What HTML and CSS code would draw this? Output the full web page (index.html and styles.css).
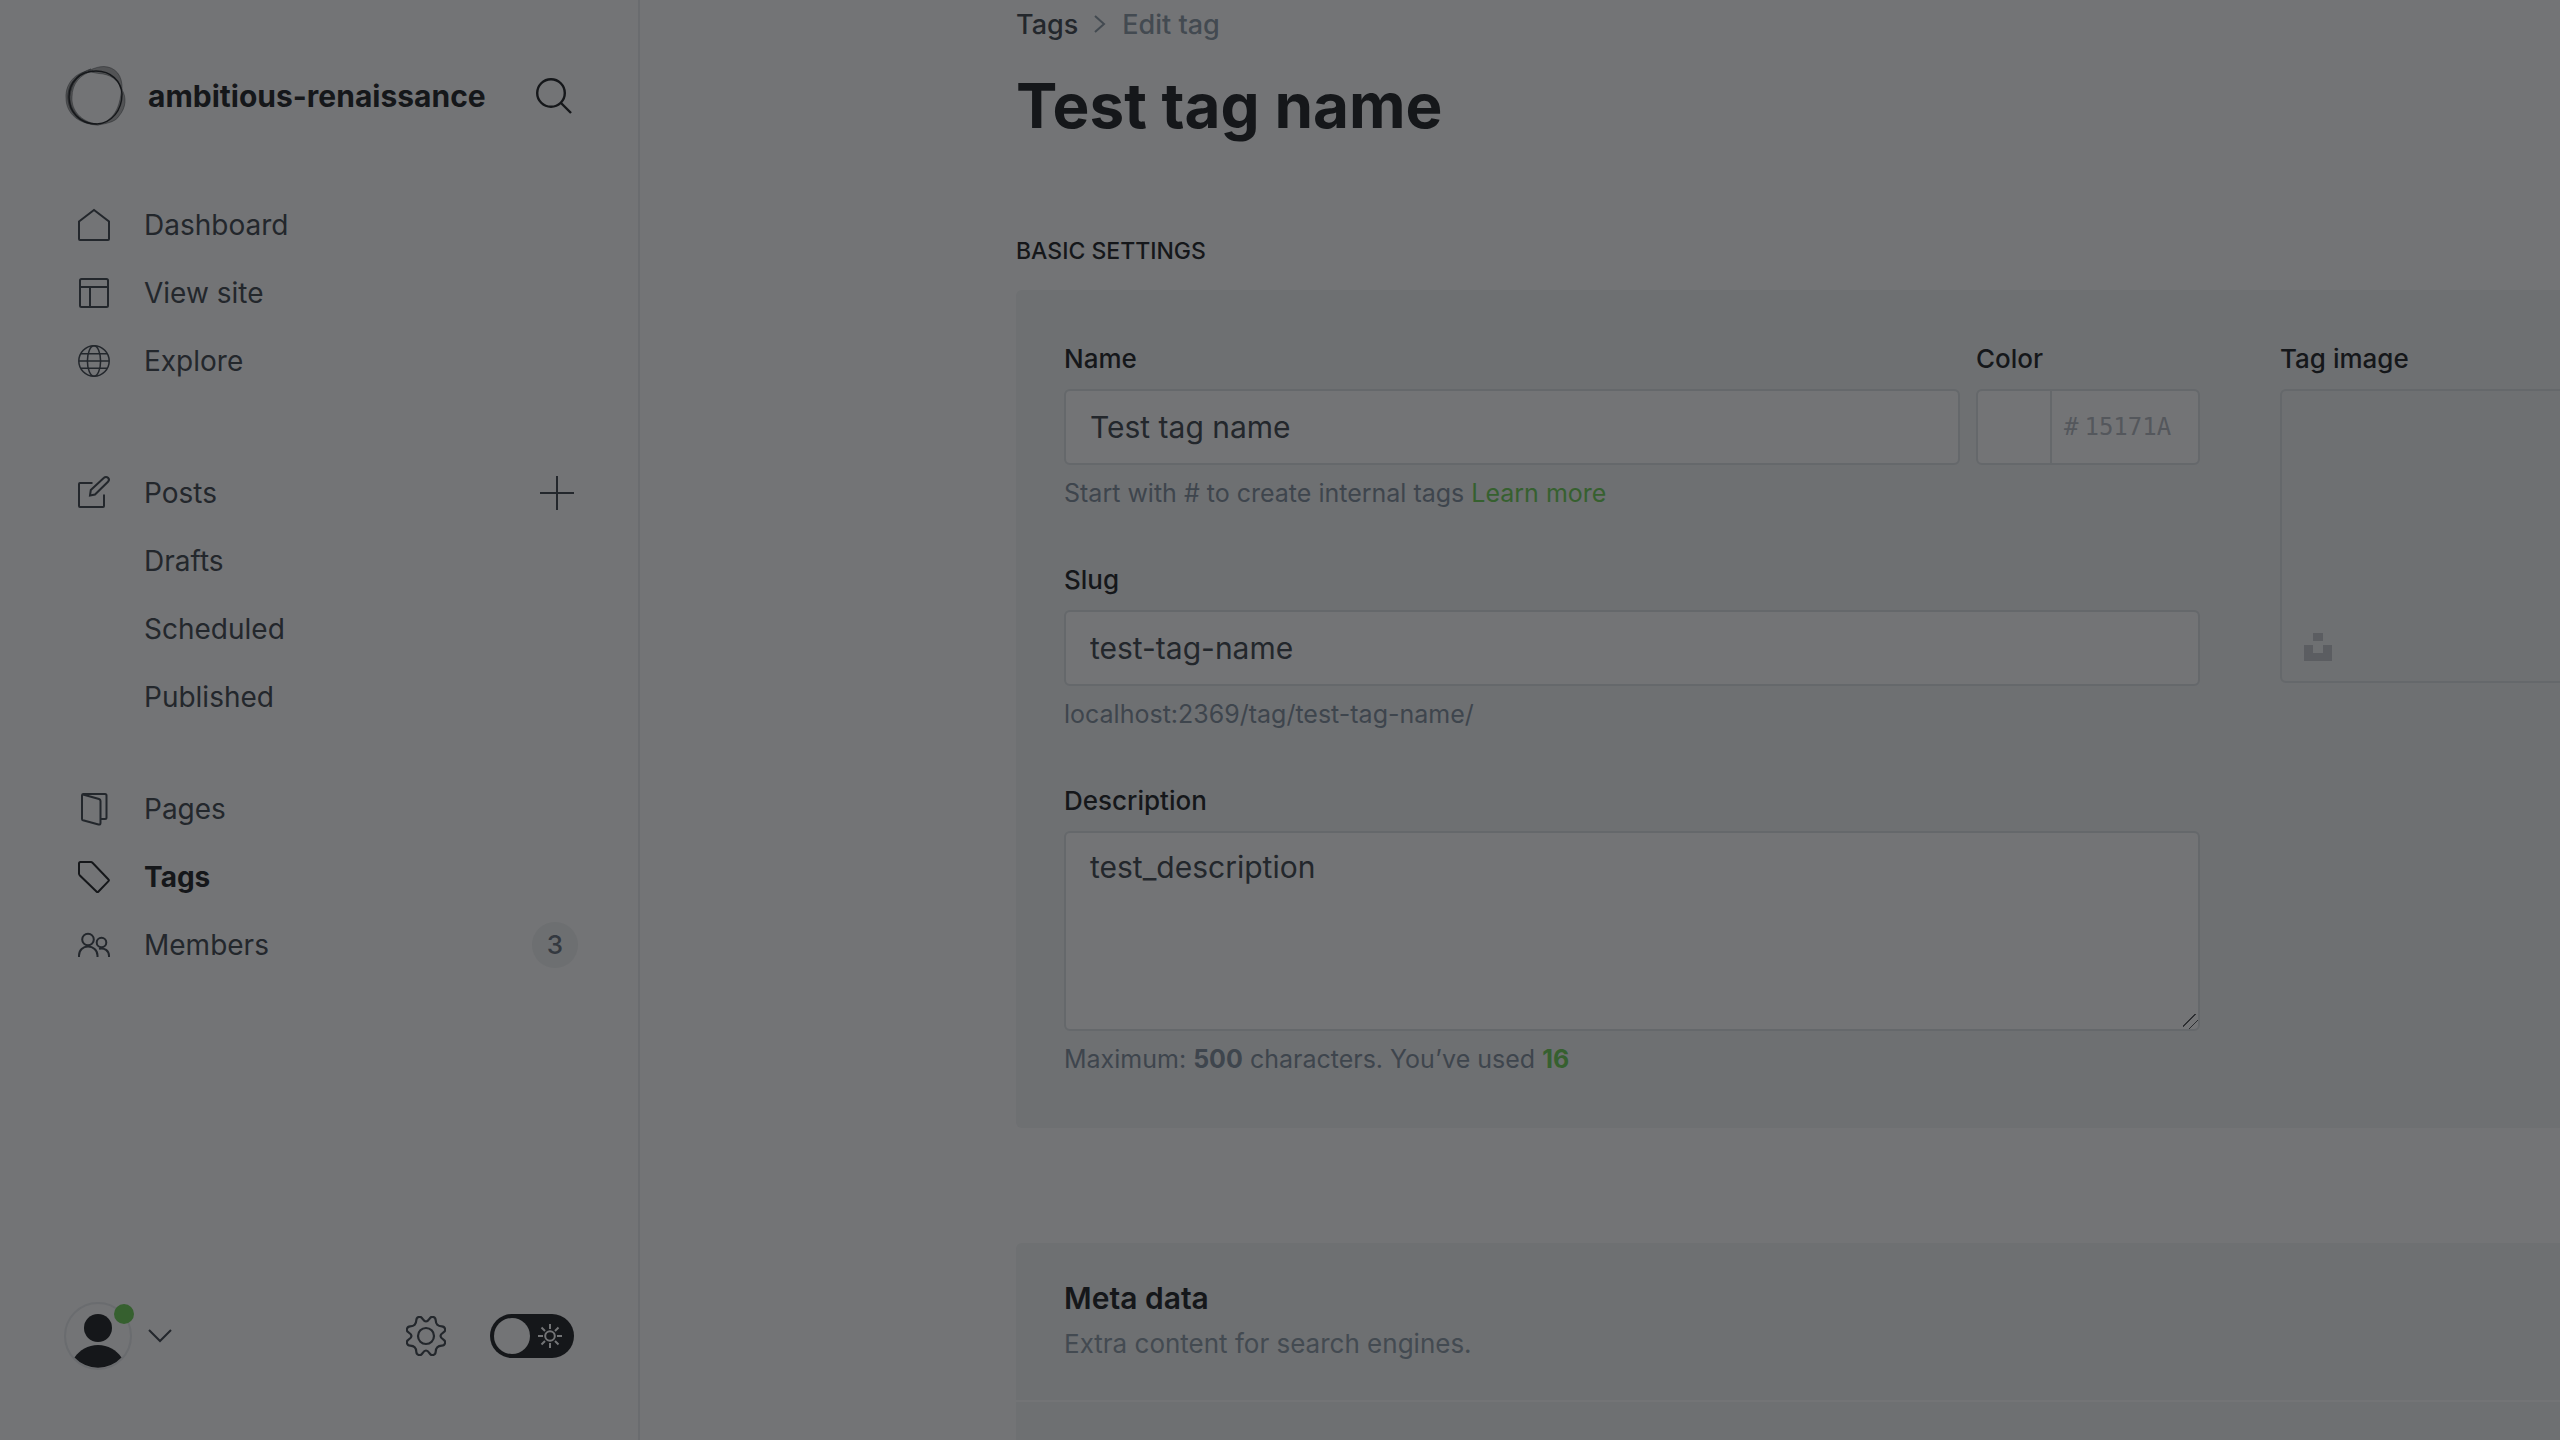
FILE: index.html
```html
<!DOCTYPE html>
<html lang="en">
<head>
<meta charset="utf-8">
<title>Edit tag - ambitious-renaissance</title>
<link rel="stylesheet" href="styles.css">
</head>
<body>
<div class="app">
  <aside class="sidebar">
    <header class="site">
      <svg class="site-logo" viewBox="0 0 60 60" aria-hidden="true">
        <g fill="#15171a" fill-opacity=".35" stroke="#15171a" stroke-opacity=".6" stroke-width=".6">
          <path d="M27 5C12 4-1 16 0 32c0 16 14 27 31 26C15 56 5 44 6 31 6 18 14 8 27 5Z"/>
          <path d="M22 5C28 2 33 .5 38 .5 49 1 57 9 56 24 53 14 44 8 33 7.500 29 7 25 6 22 5Z"/>
          <path d="M55.500 23C61 31 60 42 53 50c-3 5-9 7-21 9 16-5 22-17 23.500-36Z"/>
          <path d="M25 3C9 8 0 20 2 35c2 14 14 24 30 24C15 57 4 45 4 31 5 18 13 7 25 3Z"/>
        </g>
        <path d="M30 5c15 0 25 10 26 23 0 16-10 29-25 30C13 58 3 45 3 31 3 16 14 5 30 5Z" fill="none" stroke="#15171a" stroke-width="1.400"/>
      </svg>
      <a class="site-name" href="#">ambitious-renaissance</a>
      <button class="icon-button" type="button" aria-label="Search">
        <svg width="36" height="36" viewBox="0 0 36 36" fill="none" stroke="#15171a" stroke-width="2.4"><circle cx="15" cy="15" r="13.8"/><path d="M25 25l10 10"/></svg>
      </button>
    </header>

    <nav class="nav">
      <ul class="nav-group">
        <li class="nav-row"><a class="nav-link" href="#"><svg class="nav-icon" viewBox="0 0 32 32"><path d="M1 12.5 16 1l15 11.5V30q0 1-1 1H2q-1 0-1-1Z"/></svg>Dashboard</a></li>
        <li class="nav-row"><a class="nav-link" href="#"><svg class="nav-icon" viewBox="0 0 32 32"><rect x="2" y="2" width="28" height="28" rx="1.5"/><path d="M2 10h28M12 10v20"/></svg>View site</a></li>
        <li class="nav-row"><a class="nav-link" href="#"><svg class="nav-icon nav-icon-fine" viewBox="0 0 32 32"><circle cx="16" cy="16" r="15.2"/><ellipse cx="16" cy="16" rx="6.6" ry="15.2"/><path d="M1 16h30M3 8.8h26M3 23.2h26"/></svg>Explore</a></li>
      </ul>
      <ul class="nav-group nav-group-posts">
        <li class="nav-row"><a class="nav-link" href="#"><svg class="nav-icon" viewBox="0 0 32 32"><path d="M14.5 6H2Q1 6 1 7v22q0 1 1 1h23q1 0 1-1V17.500"/><path d="M12 18.500l.8-5.500L26 .8a2.800 2.800 0 0 1 4 4L17 17.500Z"/></svg>Posts</a>
          <button class="icon-button" type="button" aria-label="New post"><svg width="34" height="34" viewBox="0 0 34 34" stroke="#23272c" stroke-width="2"><path d="M17 0v34M0 17h34"/></svg></button></li>
        <li class="nav-row"><a class="nav-link nav-sub" href="#">Drafts</a></li>
        <li class="nav-row"><a class="nav-link nav-sub" href="#">Scheduled</a></li>
        <li class="nav-row"><a class="nav-link nav-sub" href="#">Published</a></li>
      </ul>
      <ul class="nav-group">
        <li class="nav-row"><a class="nav-link" href="#"><svg class="nav-icon" viewBox="0 0 32 32"><path d="M22.500 26H27q1.500 0 1.500-1.500V2.500Q28.500 1 27 1H5Q4 1 4 2.500V26q0 1 1 1.300l15.500 4.200q2 .5 2-1.500V8q0-1.500-1.500-2L5 1.500"/></svg>Pages</a></li>
        <li class="nav-row"><a class="nav-link nav-active" href="#"><svg class="nav-icon" viewBox="0 0 32 32"><path d="M2.500 1H13q.8 0 1.500.7L30.500 18.500q.8.800 0 1.600L20.300 30.700q-.8.800-1.600 0L1.900 14.500Q1 13.500 1 12.500v-10Q1 1 2.500 1Z"/></svg>Tags</a></li>
        <li class="nav-row"><a class="nav-link" href="#"><svg class="nav-icon" viewBox="0 0 32 32"><circle cx="10" cy="10.500" r="5.800"/><path d="M1 28v-1.500C1 21 5 17.500 10 17.500s9.500 3.500 9.500 9V28"/><circle cx="23.500" cy="13.500" r="4.800"/><path d="M21 19.800c5.500-1.500 10 2 10 7V28"/></svg>Members</a>
          <span class="badge">3</span></li>
      </ul>
    </nav>

    <footer class="account">
      <button class="account-menu" type="button" aria-label="Account menu">
        <span class="avatar">
          <svg width="64" height="64" viewBox="0 0 64 64" fill="#15171a"><circle cx="32" cy="24" r="14"/><path d="M8.500 53.500C13.500 46 22 41 32 41s18.500 5 23.500 12.500A32 32 0 0 1 8.500 53.500Z"/></svg>
          <span class="avatar-dot"></span>
        </span>
        <svg width="24" height="14" viewBox="0 0 24 14" fill="none" stroke="#23272c" stroke-width="2"><path d="M1 1l11 11L23 1"/></svg>
      </button>
      <a class="settings" href="#" aria-label="Settings">
        <svg width="40" height="40" viewBox="0 0 40 40" fill="none" stroke="#23272c" stroke-width="2.200">
          <defs><path id="gear-side" d="M20 5.500C21.800 5.500 22.300 4.500 23.800 2.300 25.500-.3 29.500.8 29.700 4.200 29.800 6.500 29.900 7.300 31.300 8.700 32.700 10.100 33.500 10.200 35.800 10.300 39.200 10.500 40.300 14.500 37.700 16.200 35.500 17.700 34.500 18.200 34.500 20"/></defs>
          <use href="#gear-side"/><use href="#gear-side" transform="rotate(90 20 20)"/><use href="#gear-side" transform="rotate(180 20 20)"/><use href="#gear-side" transform="rotate(270 20 20)"/>
          <circle cx="20" cy="20" r="8"/>
        </svg>
      </a>
      <button class="theme-switch" type="button" aria-label="Toggle night shift">
        <span class="theme-knob"></span>
        <svg width="24" height="24" viewBox="0 0 24 24" fill="none" stroke="#737476" stroke-width="2"><circle cx="12" cy="12" r="4.800"/><path d="M12 0v5M12 19v5M0 12h5M19 12h5M3.500 3.500l3.500 3.500M17 17l3.500 3.500M3.500 20.500 7 17M17 7l3.500-3.500"/></svg>
      </button>
    </footer>
  </aside>

  <main class="main">
    <div class="content">
      <nav class="breadcrumb">
        <a class="breadcrumb-link" href="#">Tags</a>
        <svg width="12" height="18" viewBox="0 0 12 18" fill="none" stroke="#434a51" stroke-width="2"><path d="M1 1l9 8-9 8"/></svg>
        <span>Edit tag</span>
      </nav>
      <h1 class="title">Test tag name</h1>

      <h2 class="section-title">BASIC SETTINGS</h2>
      <form class="panel settings-form">
        <div class="fields">
          <div class="name-row">
            <div class="field">
              <label class="label" for="tag-name">Name</label>
              <input class="input" id="tag-name" type="text" value="Test tag name">
              <p class="help">Start with # to create internal tags <a class="help-link" href="#">Learn more</a></p>
            </div>
            <div class="field">
              <label class="label" for="tag-color">Color</label>
              <div class="color-box">
                <span class="swatch"></span>
                <span class="color-hash">#</span>
                <input class="color-input" id="tag-color" type="text" placeholder="15171A">
              </div>
            </div>
          </div>
          <div class="field">
            <label class="label" for="tag-slug">Slug</label>
            <input class="input" id="tag-slug" type="text" value="test-tag-name">
            <p class="help">localhost:2369/tag/test-tag-name/</p>
          </div>
          <div class="field">
            <label class="label" for="tag-description">Description</label>
            <textarea class="input textarea" id="tag-description">test_description</textarea>
            <p class="help">Maximum: <b>500</b> characters. You’ve used <b class="count">16</b></p>
          </div>
        </div>
        <div class="field">
          <span class="label">Tag image</span>
          <div class="uploader">
            <button class="icon-button" type="button" aria-label="Unsplash"><svg width="28" height="28" viewBox="0 0 28 28" fill="#5b5d61"><path d="M9 0h10v8H9zM0 12h9v8h10v-8h9v16H0z"/></svg></button>
          </div>
        </div>
      </form>

      <section class="panel meta">
        <div class="meta-head">
          <h3 class="meta-title">Meta data</h3>
          <p class="meta-text">Extra content for search engines.</p>
        </div>
      </section>
    </div>
  </main>
</div>
</body>
</html>
```
FILE: styles.css
```css
:root {
  --page: #737476;
  --panel: #6e7072;
  --line: #65686b;
  --line-soft: #6a6c6f;
  --ink: #15171a;
  --text: #23272c;
  --muted: #3e454d;
  --muted-light: #434a51;
  --green: #36602f;
}

* { box-sizing: border-box; }

body {
  margin: 0;
  height: 100vh;
  overflow: hidden;
  background: var(--page);
  color: var(--text);
  font-family: Inter, "Liberation Sans", sans-serif;
  font-size: 28px;
}

h1, h2, h3, p, ul { margin: 0; padding: 0; }
ul { list-style: none; }
a { color: inherit; text-decoration: none; }
svg { display: block; flex: none; }
button { padding: 0; border: 0; background: none; font: inherit; color: inherit; }
input, textarea { font: inherit; color: inherit; }

.app { display: flex; height: 100vh; }

.sidebar {
  display: flex;
  flex: none;
  flex-direction: column;
  width: 640px;
  padding: 64px 64px 70px;
  border-right: 2px solid var(--line-soft);
}

.site { display: flex; align-items: center; height: 64px; padding-right: 2px; }
.site-logo { width: 60px; height: 60px; margin-left: 2px; overflow: visible; }
.site-name { flex: 1; margin-left: 22px; color: var(--ink); font-size: 30px; font-weight: 700; }

.nav { display: flex; flex: 1; flex-direction: column; padding-top: 63px; }
.nav-group { margin-bottom: 64px; }
.nav-group-posts { margin-bottom: 44px; }
.nav-row { display: flex; align-items: center; height: 68px; }
.nav-link { display: flex; flex: 1; align-items: center; gap: 34px; padding-left: 14px; }
.nav-sub { padding-left: 80px; }
.nav-active { color: var(--ink); font-weight: 700; }
.nav-icon { width: 32px; height: 32px; fill: none; stroke: currentColor; stroke-width: 2; overflow: visible; }
.nav-icon-fine { stroke-width: 1.5; }
.badge {
  width: 46px;
  height: 46px;
  margin-right: -4px;
  border-radius: 50%;
  background: #6d6f71;
  color: #343940;
  font-size: 26px;
  font-weight: 500;
  line-height: 46px;
  text-align: center;
}

.account { display: flex; align-items: center; gap: 44px; }
.account-menu { display: flex; flex: none; align-items: center; gap: 16px; margin-right: auto; }
.avatar { position: relative; border: 2px solid var(--line-soft); border-radius: 50%; }
.avatar-dot { position: absolute; top: 0; right: -4px; width: 20px; height: 20px; border-radius: 50%; background: var(--green); }
.theme-switch { display: flex; align-items: center; justify-content: space-between; width: 84px; height: 44px; padding: 0 12px 0 4px; border-radius: 22px; background: var(--ink); }
.theme-knob { width: 36px; height: 36px; border-radius: 50%; background: var(--page); }

.main { flex: 1; min-width: 0; overflow: hidden; }
.content { width: calc(100% - 40px); margin-left: 376px; }

.breadcrumb { display: flex; align-items: center; gap: 16px; height: 48px; color: var(--muted-light); font-size: 27px; font-weight: 500; }
.breadcrumb-link { color: var(--text); }
.title { margin: 18px 0 89px; color: var(--ink); font-size: 62px; font-weight: 700; line-height: 80px; white-space: nowrap; }
.section-title { margin-bottom: 23px; color: var(--ink); font-size: 23px; font-weight: 500; line-height: 32px; }

.panel { border-radius: 6px; background: var(--panel); }
.settings-form { display: grid; grid-template-columns: 2fr 1fr; gap: 80px; padding: 48px 48px 53px; }
.fields { display: grid; gap: 50px; }
.name-row { display: grid; grid-template-columns: 1fr 224px; gap: 16px; }
.label { display: block; margin-bottom: 9px; color: var(--ink); font-size: 26px; font-weight: 500; line-height: 42px; }
.input { display: block; width: 100%; height: 76px; padding: 0 24px; border: 2px solid var(--line); border-radius: 6px; outline: 0; background: var(--page); font-size: 30px; }
.textarea { height: 200px; padding: 14px 24px; line-height: 40px; resize: vertical; }
.textarea::-webkit-resizer {
  background: linear-gradient(135deg, transparent 38%, #2c2e31 38% 44%, transparent 44% 67%, #2c2e31 67% 73%, transparent 73%);
}
.help { margin-top: 12px; color: var(--muted); font-size: 25px; line-height: 32px; }
.help-link { color: var(--green); }
.count { color: var(--green); }
.color-box { display: flex; align-items: center; height: 76px; border: 2px solid var(--line); border-radius: 6px; background: var(--page); color: #54575c; font-family: "DejaVu Sans Mono", monospace; font-size: 24px; }
.swatch { flex: none; align-self: stretch; width: 74px; border-right: 2px solid var(--line); }
.color-hash { padding: 0 6px 0 12px; }
.color-input { width: 100%; min-width: 0; padding: 0; border: 0; outline: 0; background: none; }
.color-input::placeholder { color: inherit; opacity: 1; }
.uploader { display: flex; align-items: flex-end; height: 294px; padding: 20px 22px; border: 2px solid var(--line); border-radius: 6px; }

.meta { height: 240px; margin-top: 115px; }
.meta-head { padding: 35px 48px 38px; border-bottom: 2px solid var(--page); }
.meta-title { color: var(--ink); font-size: 30px; font-weight: 600; line-height: 40px; }
.meta-text { margin-top: 8px; color: var(--muted-light); font-size: 26px; line-height: 36px; }
```
